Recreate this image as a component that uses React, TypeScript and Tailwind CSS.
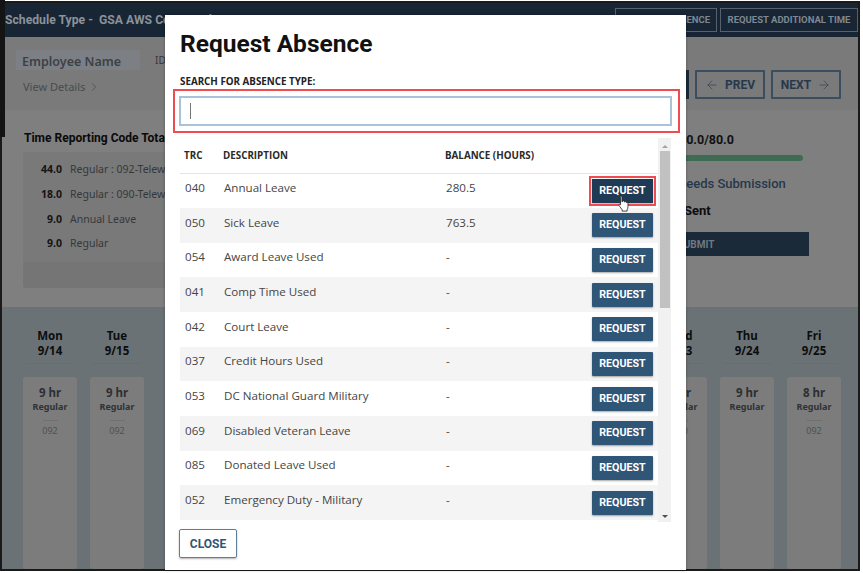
import { ArrowLeft, ArrowRight, ChevronRight } from 'lucide-react';

const rows = [
  { trc: '040', desc: 'Annual Leave', balance: '280.5' },
  { trc: '050', desc: 'Sick Leave', balance: '763.5' },
  { trc: '054', desc: 'Award Leave Used', balance: '-' },
  { trc: '041', desc: 'Comp Time Used', balance: '-' },
  { trc: '042', desc: 'Court Leave', balance: '-' },
  { trc: '037', desc: 'Credit Hours Used', balance: '-' },
  { trc: '053', desc: 'DC National Guard Military', balance: '-' },
  { trc: '069', desc: 'Disabled Veteran Leave', balance: '-' },
  { trc: '085', desc: 'Donated Leave Used', balance: '-' },
  { trc: '052', desc: 'Emergency Duty - Military', balance: '-' },
];

const totals = [
  { hours: '44.0', label: 'Regular : 092-Telework' },
  { hours: '18.0', label: 'Regular : 090-Telework' },
  { hours: '9.0', label: 'Annual Leave' },
  { hours: '9.0', label: 'Regular' },
];

const weekOne = [
  { day: 'Mon', date: '9/14', hours: '9 hr', code: '092' },
  { day: 'Tue', date: '9/15', hours: '9 hr', code: '092' },
];

const weekTwo = [
  { day: 'Wed', date: '9/23', hours: '9 hr', code: '090' },
  { day: 'Thu', date: '9/24', hours: '9 hr', code: '' },
  { day: 'Fri', date: '9/25', hours: '8 hr', code: '092' },
];

function DayColumn({ day, date, hours, code }: { day: string; date: string; hours: string; code: string }) {
  return (
    <div className="w-[54px] flex flex-col items-center">
      <div className="w-[48px] pt-[22px] pb-[5px] border-b border-[#676d71] text-center text-[11.5px] leading-[14.5px] font-bold text-[#0b0d0e]">
        <p>{day}</p>
        <p>{date}</p>
      </div>
      <div className="mt-[13px] w-[54px] h-[200px] rounded-[3px] bg-[#7c7c7c] pt-[9px] flex flex-col items-center">
        <p className="text-[11.5px] leading-[14px] font-bold text-[#2c2f33]">{hours}</p>
        <p className="text-[9px] leading-[14px] font-bold text-[#2f3236]">Regular</p>
        {code && (
          <>
            <div className="mt-[6px] w-[15px] border-t border-[#707070]" />
            <p className="mt-[4px] text-[9px] leading-[12px] text-[#4f5154]">{code}</p>
          </>
        )}
      </div>
    </div>
  );
}

function Background() {
  return (
    <div className="w-full h-full flex flex-col font-['Noto_Sans',sans-serif]">
      <div className="h-[34px] shrink-0 bg-[#172534] flex items-center justify-between pl-[3px]">
        <p className="font-['Roboto',sans-serif] text-[12.2px] font-bold text-[#8b9299] whitespace-pre">Schedule Type -  GSA AWS Converted</p>
        <div className="flex gap-[3px]">
          <span className="w-[102px] h-[24px] border border-[#55616e] flex items-center justify-end pr-[6px] font-['Roboto',sans-serif] text-[9.5px] font-bold text-[#7f8890]">
            REQUEST ABSENCE
          </span>
          <span className="w-[138px] h-[24px] border border-[#55616e] flex items-center justify-center font-['Roboto',sans-serif] text-[9.5px] font-bold text-[#7f8890]">
            REQUEST ADDITIONAL TIME
          </span>
        </div>
      </div>

      <div className="h-[73px] shrink-0 bg-[#7a7a7a] flex justify-between pl-[14px] pr-[17px]">
        <div className="pt-[13px]">
          <div className="flex items-center">
            <p className="w-[124px] h-[20px] bg-[#7c8085] pl-[6px] pt-[2px] text-[12.5px] leading-[20px] font-semibold text-[#3d4146]">Employee Name</p>
            <p className="ml-[15px] text-[10px] text-[#33373b]">ID</p>
          </div>
          <p className="mt-[9px] ml-[7px] flex items-center text-[11px] text-[#474c50]">
            View Details
            <ChevronRight size={14} strokeWidth={1.25} className="ml-[2px]" />
          </p>
        </div>
        <div className="flex gap-[6px] pt-[33px] items-start">
          <div className="w-[10px] h-[29px] bg-[#1a2a3a] -ml-[10px]" />
          <div className="w-[70px] h-[29px] border-2 border-[#3b4e60] rounded-[1px] flex items-center justify-center gap-[6px] font-['Roboto',sans-serif] text-[12px] font-bold text-[#26394c]">
            <ArrowLeft size={14} strokeWidth={1} />
            PREV
          </div>
          <div className="w-[70px] h-[29px] border-2 border-[#3b4e60] rounded-[1px] flex items-center justify-center gap-[6px] font-['Roboto',sans-serif] text-[12px] font-bold text-[#26394c]">
            NEXT
            <ArrowRight size={14} strokeWidth={1} />
          </div>
        </div>
      </div>

      <div className="h-[197px] shrink-0 bg-[#7f7f7f] flex justify-between pl-[21px] pr-[49px]">
        <div className="w-[200px]">
          <p className="pt-[20px] pl-[1px] font-['Roboto',sans-serif] text-[12px] leading-[16px] font-bold text-[#0a0a0a] whitespace-nowrap">
            Time Reporting Code Totals
          </p>
          <div className="mt-[6px] h-[136px] bg-[#797979] rounded-[3px] overflow-hidden flex flex-col">
            <div className="flex-1 pt-[6px]">
              {totals.map((t) => (
                <div key={t.hours + t.label} className="flex items-center h-[24.6px] text-[10.5px] whitespace-nowrap">
                  <span className="w-[39px] text-right font-bold text-[#141414]">{t.hours}</span>
                  <span className="ml-[8px] text-[#35383b]">{t.label}</span>
                </div>
              ))}
            </div>
            <div className="h-[26px] bg-[#757575]" />
          </div>
        </div>
        <div className="w-[226px] pt-[22px] font-['Roboto',sans-serif]">
          <p className="ml-[96px] text-[12.5px] leading-[16px] font-bold text-[#111]">80.0/80.0</p>
          <div className="mt-[7px] h-[6px] w-[220px] rounded-full bg-[#3f6b52]" />
          <p className="mt-[15px] ml-[94px] text-[13px] leading-[16px] font-medium text-[#26384a] whitespace-nowrap">Needs Submission</p>
          <p className="mt-[11px] ml-[101px] text-[13px] leading-[16px] font-bold text-[#0d0d0d]">Sent</p>
          <div className="mt-[13px] h-[24px] bg-[#1a2a39] flex items-center justify-center text-[10px] font-bold text-[#6f7882]">SUBMIT</div>
        </div>
      </div>

      <div className="flex-1 bg-[#6b7276] overflow-hidden flex justify-between pl-[21px] pr-[17px]">
        <div className="flex gap-[13px]">
          {weekOne.map((d) => (
            <DayColumn key={d.date} {...d} />
          ))}
        </div>
        <div className="flex gap-[13px]">
          {weekTwo.map((d) => (
            <DayColumn key={d.date} {...d} />
          ))}
        </div>
      </div>
    </div>
  );
}

function RequestButton({ active }: { active?: boolean }) {
  return (
    <button
      className={`w-[61px] h-[24px] shadow-[0_1px_2px_rgba(0,0,0,0.35)] font-['Roboto',sans-serif] text-[10.7px] font-bold text-white ${
        active ? 'bg-[#1f3a55] outline-2 outline-offset-[1px] outline-[#ef4b50]' : 'rounded-[1px] bg-[#2f5577]'
      }`}
    >
      REQUEST
    </button>
  );
}

function Modal() {
  return (
    <div className="absolute left-[165px] top-[15px] w-[521px] h-[555px] bg-white flex flex-col font-['Open_Sans',sans-serif] shadow-[0_0_3px_rgba(0,0,0,0.3)]">
      <h1 className="pl-[15px] pt-[14px] font-['Roboto',sans-serif] text-[24.5px] leading-[30px] font-bold text-[#111]">Request Absence</h1>
      <p className="pl-[15px] mt-[16px] text-[9.8px] leading-[14px] font-bold text-[#222]">SEARCH FOR ABSENCE TYPE:</p>

      <div className="ml-[8px] w-[507px] h-[44px] border-2 border-[#ef4b50] pl-[4px] pt-[5px]">
        <div className="w-[493px] h-[30px] border-2 border-[#a9c4da] pl-[9px] flex items-center">
          <span className="w-[1px] h-[16px] bg-[#777]" />
        </div>
      </div>

      <div className="ml-[15px] mt-[5px] flex w-[491px] h-[384px]">
        <div className="w-[478px]">
          <div className="h-[35.5px] flex items-center border-b border-[#dfe6ea] text-[9.8px] font-bold text-[#2a2a2a] pt-[2px]">
            <span className="w-[43px] pl-[4px]">TRC</span>
            <span className="w-[222px]">DESCRIPTION</span>
            <span>BALANCE (HOURS)</span>
          </div>
          {rows.map((row, i) => (
            <div key={row.trc} className={`h-[34.67px] flex items-center text-[11.6px] text-[#454545] ${i % 2 === 1 ? 'bg-[#f4f4f4]' : 'bg-white'}`}>
              <span className="w-[44px] pl-[5px] mb-[6px]">{row.trc}</span>
              <span className="w-[222px] mb-[6px]">{row.desc}</span>
              <span className="w-[146px] mb-[6px]">{row.balance}</span>
              <RequestButton active={i === 0} />
            </div>
          ))}
        </div>
        <div className="w-[13px] bg-[#f1f1f1] flex flex-col items-center">
          <span className="mt-[7px] border-x-[3px] border-b-[3px] border-x-transparent border-b-[#a3a3a3]" />
          <div className="mt-[3px] w-[10px] h-[157px] bg-[#c1c1c1]" />
          <span className="mt-auto mb-[4px] border-x-[3px] border-t-[3px] border-x-transparent border-t-[#505050]" />
        </div>
      </div>

      <button className="ml-[14px] mt-[7px] w-[58px] h-[29px] rounded-[2px] border border-[#5d7f9b] shadow-[0_1px_2px_rgba(0,0,0,0.3)] font-['Roboto',sans-serif] text-[12px] font-bold text-[#2f5577]">
        CLOSE
      </button>
    </div>
  );
}

function HandCursor() {
  return (
    <svg width="13" height="17" viewBox="0 0 14 19" className="absolute left-[617px] top-[195px]">
      <path
        d="M4 1.200c.8 0 1.300.6 1.300 1.400v5l.6-.1V6.900c0-.7 1.900-.8 2 0v.9h.4c.2-.6 1.800-.6 1.900.2v.5c.4-.4 1.700-.3 1.800.6v4c0 1.400-.5 2.500-1 3.500v1.400H5.500v-1.500c-.8-1-1.800-2.500-3.500-4.800-.6-.9.5-1.700 1.300-1l.4.4V2.600c0-.8-.2-1.400.3-1.400z"
        fill="#fff"
        stroke="#222"
        strokeWidth="0.9"
        strokeLinejoin="round"
      />
    </svg>
  );
}

export default function App() {
  return (
    <div className="relative w-[863px] h-[573px] bg-white overflow-hidden pt-[1px]">
      <div className="w-[860px] h-[570px] border-2 border-[#1a1a1a] overflow-hidden">
        <Background />
      </div>
      <div className="absolute left-0 top-0 w-[5px] h-[137px] bg-[#141414]" />
      <Modal />
      <HandCursor />
    </div>
  );
}
